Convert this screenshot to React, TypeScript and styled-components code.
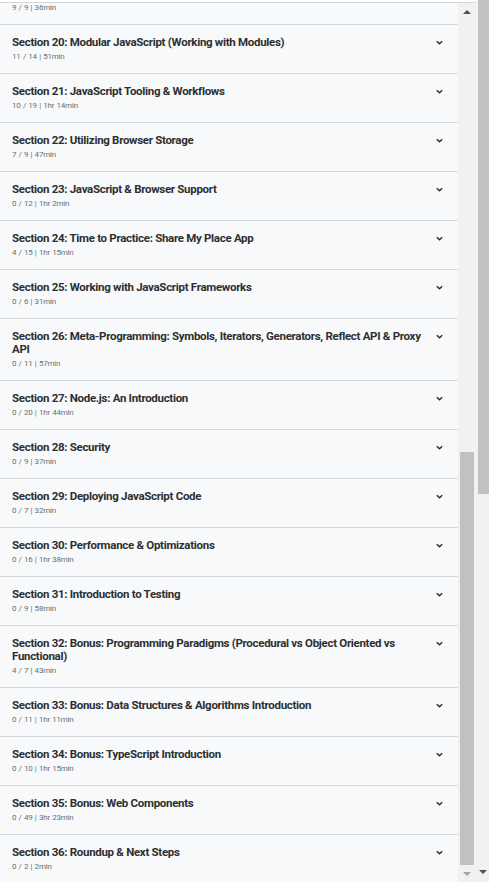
import React from "react";
import styled, { createGlobalStyle } from "styled-components";

const Global = createGlobalStyle`
  html, body { margin: 0; padding: 0; background: #ffffff; overflow: hidden; }
  #root { height: 882px; }
`;

type Section = { n: number; title: string; done: number; total: number; time: string };

const sections: Section[] = [
  { n: 19, title: "Working with Libraries", done: 9, total: 9, time: "36min" },
  { n: 20, title: "Modular JavaScript (Working with Modules)", done: 11, total: 14, time: "51min" },
  { n: 21, title: "JavaScript Tooling & Workflows", done: 10, total: 19, time: "1hr 14min" },
  { n: 22, title: "Utilizing Browser Storage", done: 7, total: 9, time: "47min" },
  { n: 23, title: "JavaScript & Browser Support", done: 0, total: 12, time: "1hr 2min" },
  { n: 24, title: "Time to Practice: Share My Place App", done: 4, total: 15, time: "1hr 15min" },
  { n: 25, title: "Working with JavaScript Frameworks", done: 0, total: 6, time: "31min" },
  { n: 26, title: "Meta-Programming: Symbols, Iterators, Generators, Reflect API & Proxy API", done: 0, total: 11, time: "57min" },
  { n: 27, title: "Node.js: An Introduction", done: 0, total: 20, time: "1hr 44min" },
  { n: 28, title: "Security", done: 0, total: 9, time: "37min" },
  { n: 29, title: "Deploying JavaScript Code", done: 0, total: 7, time: "32min" },
  { n: 30, title: "Performance & Optimizations", done: 0, total: 16, time: "1hr 38min" },
  { n: 31, title: "Introduction to Testing", done: 0, total: 9, time: "58min" },
  { n: 32, title: "Bonus: Programming Paradigms (Procedural vs Object Oriented vs Functional)", done: 4, total: 7, time: "43min" },
  { n: 33, title: "Bonus: Data Structures & Algorithms Introduction", done: 0, total: 11, time: "1hr 11min" },
  { n: 34, title: "Bonus: TypeScript Introduction", done: 0, total: 10, time: "1hr 15min" },
  { n: 35, title: "Bonus: Web Components", done: 0, total: 49, time: "3hr 23min" },
  { n: 36, title: "Roundup & Next Steps", done: 0, total: 2, time: "2min" },
];

const Frame = styled.div`
  display: flex;
  height: 882px;
  width: 489px;
  overflow: hidden;
  background: #ffffff;
`;

const Panel = styled.div`
  display: flex;
  width: 476px;
  margin-top: 2px;
  border-top: 1px solid #d1d7dc;
  height: 879px;
`;

const Viewport = styled.div`
  width: 458px;
  overflow: hidden;
  background: #f7f9fa;
`;

const List = styled.div`
  display: flex;
  flex-direction: column;
  margin-top: -27px;
`;

const Row = styled.div`
  display: flex;
  align-items: flex-start;
  gap: 12px;
  padding: 11px 14px 10px 12px;
  border-bottom: 1px solid #d1d7dc;
  background: #f7f9fa;
`;

const Texts = styled.div`
  flex: 1;
  display: flex;
  flex-direction: column;
  gap: 2px;
`;

const Title = styled.div`
  font-family: Roboto, "Liberation Sans", Arial, sans-serif;
  font-weight: 700;
  font-size: 11.5px;
  line-height: 13px;
  letter-spacing: -0.3px;
  color: #2d2f31;
`;

const Meta = styled.div`
  font-family: Roboto, "Liberation Sans", Arial, sans-serif;
  font-size: 8px;
  line-height: 12px;
  letter-spacing: -0.2px;
  word-spacing: 0.5px;
  color: #6a6f73;
`;

const Chevron = styled.svg`
  width: 9px;
  height: 9px;
  margin-top: 2px;
  margin-left: 1px;
  flex: none;
`;

const Track = styled.div<{ $w: number }>`
  width: ${(p) => p.$w}px;
  display: flex;
  flex-direction: column;
  align-items: center;
  background: #f1f1f1;
  box-sizing: border-box;
`;

const Arrow = styled.div<{ $dir: "up" | "down"; $color: string }>`
  flex: none;
  height: 17px;
  width: 100%;
  display: flex;
  align-items: center;
  justify-content: center;
  &::after {
    content: "";
    width: 0;
    height: 0;
    border-left: 4px solid transparent;
    border-right: 4px solid transparent;
    ${(p) =>
      p.$dir === "up"
        ? `border-bottom: 4px solid ${p.$color};`
        : `border-top: 4px solid ${p.$color};`}
  }
`;

const Gutter = styled.div`
  flex: 1;
  width: 100%;
  display: flex;
  flex-direction: column;
`;

const Spacer = styled.div<{ $h: number }>`
  height: ${(p) => p.$h}px;
  flex: none;
`;

const Thumb = styled.div<{ $inset: number }>`
  flex: 1;
  margin: 0 ${(p) => p.$inset}px;
  background: #c1c1c1;
`;

const OuterTrack = styled.div`
  width: 13px;
  display: flex;
  flex-direction: column;
  background: #f1f1f1;
  padding-left: 2px;
  box-sizing: border-box;
`;

const OuterThumb = styled.div`
  height: 494px;
  background: #c1c1c1;
  flex: none;
`;

const OuterRest = styled.div`
  flex: 1;
`;

const OuterArrow = styled.div`
  height: 20px;
  display: flex;
  align-items: center;
  justify-content: center;
  padding-right: 2px;
  &::after {
    content: "";
    border-left: 4px solid transparent;
    border-right: 4px solid transparent;
    border-top: 4px solid #505050;
  }
`;

export default function App() {
  return (
    <>
      <Global />
      <Frame>
        <Panel>
          <Viewport>
            <List>
              {sections.map((s) => (
                <Row key={s.n}>
                  <Texts>
                    <Title>
                      Section {s.n}: {s.title}
                    </Title>
                    <Meta>
                      {s.done} / {s.total} | {s.time}
                    </Meta>
                  </Texts>
                  <Chevron viewBox="0 0 10 10">
                    <path d="M2 3.5 L5 6.5 L8 3.5" fill="none" stroke="#2d2f31" strokeWidth="1.6" />
                  </Chevron>
                </Row>
              ))}
            </List>
          </Viewport>
          <Track $w={18}>
            <Arrow $dir="up" $color="#505050" />
            <Gutter>
              <Spacer $h={432} />
              <Thumb $inset={2} />
            </Gutter>
            <Arrow $dir="down" $color="#a3a3a3" />
          </Track>
        </Panel>
        <OuterTrack>
          <OuterThumb />
          <OuterRest />
          <OuterArrow />
        </OuterTrack>
      </Frame>
    </>
  );
}
